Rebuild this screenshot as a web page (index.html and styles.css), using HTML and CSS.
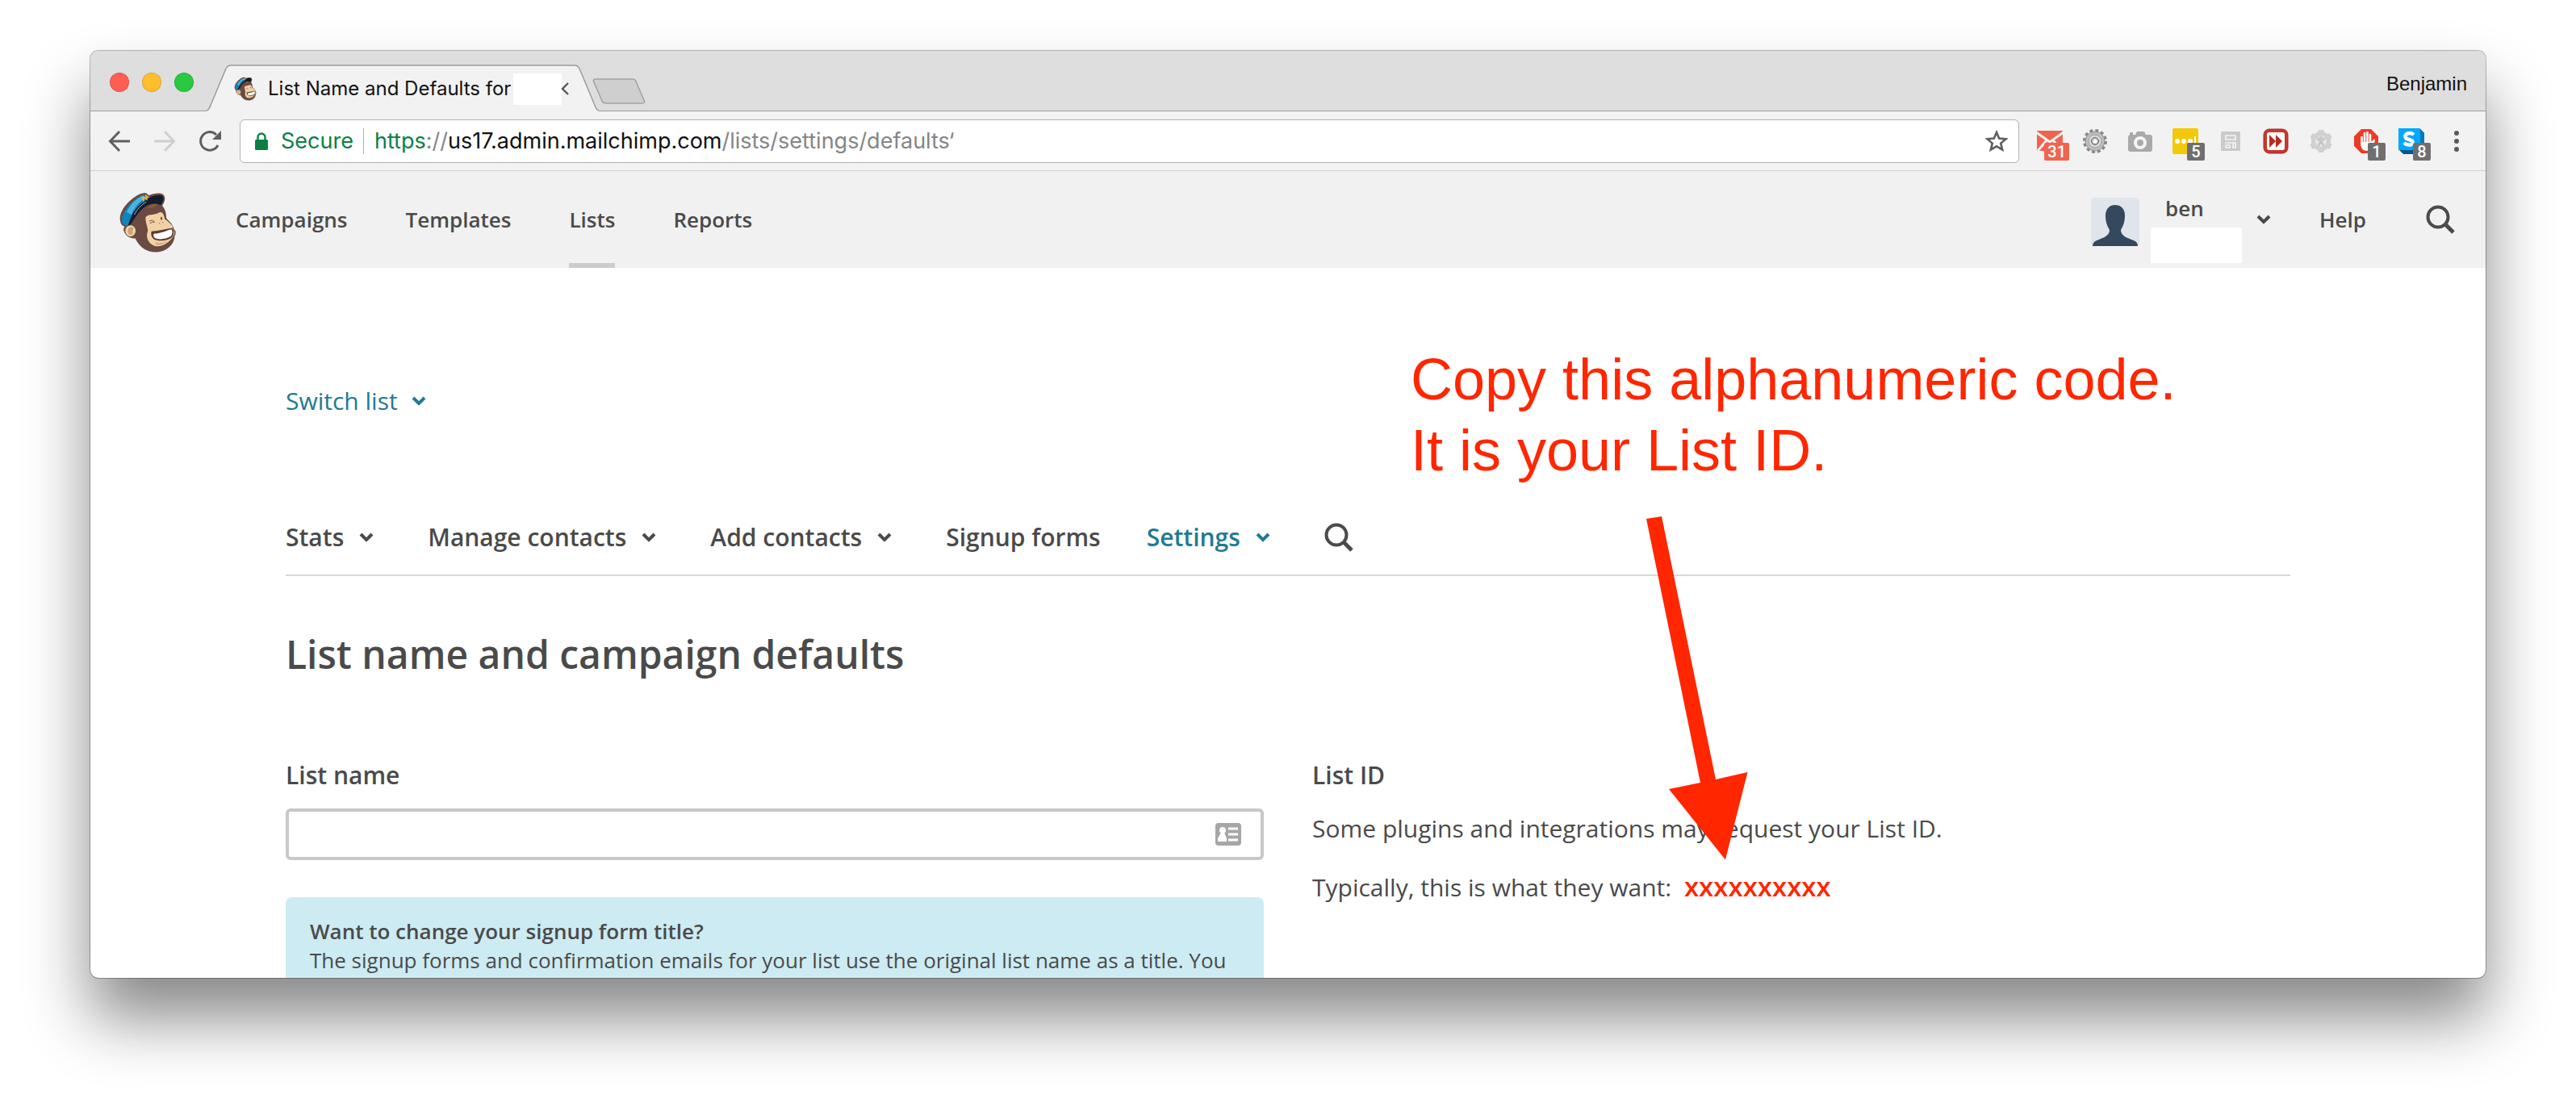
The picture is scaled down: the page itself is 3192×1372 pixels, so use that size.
FILE: index.html
```html
<!DOCTYPE html>
<html lang="en">
<head>
<meta charset="utf-8">
<title>List Name and Defaults</title>
<link rel="stylesheet" href="styles.css">
</head>
<body>
<svg class="defs" aria-hidden="true">
  <symbol id="chimp" viewBox="54 54 216 224">
    <path d="M60 160C56 145 64 122 80 103C100 78 130 58 148 57C156 56 162 61 166 66C184 58 206 56 217 61C230 68 228 88 216 104C226 116 232 132 231 150C240 160 250 168 257 182L260 194C268 197 268 206 262 218C262 246 234 276 196 277C160 278 132 260 116 226C100 228 80 218 74 200C70 194 74 186 76 182C66 178 61 172 60 160Z" fill="#6b4a41"/>
    <path d="M66 160C64 140 84 108 112 84C128 70 144 62 150 64C158 68 162 74 166 80C136 96 112 122 104 140C98 156 94 168 88 180C74 178 68 172 66 160Z" fill="#0a86bd"/>
    <path d="M84 128C96 100 120 76 148 66L154 76C130 90 112 110 102 138Z" fill="#4bb3e0"/>
    <path d="M104 138C120 108 142 92 166 76C186 64 208 62 216 68C224 76 220 90 210 102C190 92 164 98 150 110C132 122 118 146 100 172L88 180C92 168 98 150 104 138Z" fill="#111c2e"/>
    <path d="M112 138C122 118 138 102 156 90" fill="none" stroke="#fff" stroke-width="2"/>
    <path d="M140 72L146 84L148 74L158 80L156 67L166 74" fill="none" stroke="#fbb034" stroke-width="5"/>
    <path d="M160 112C170 98 190 94 204 102C194 102 188 106 184 112Z" fill="#8a5a3b"/>
    <path d="M154 148C160 134 184 140 200 132C214 122 224 134 225 154C236 160 248 172 256 182C250 190 262 198 262 204C256 232 222 258 192 255C168 250 156 228 160 206C168 192 154 176 154 148Z" fill="#f2d1a5"/>
    <path d="M176 200C206 198 232 190 252 188C262 194 260 212 252 222C236 236 200 238 184 228C174 220 174 206 176 200Z" fill="#5a3b33"/>
    <path d="M186 208C212 208 236 194 250 192C256 198 254 210 248 218C230 230 200 232 188 224C182 218 182 212 186 208Z" fill="#fff"/>
    <path d="M168 162C176 156 184 160 188 166C182 162 176 168 170 170M204 168L208 172M216 164L220 168" fill="none" stroke="#7b5140" stroke-width="3"/>
    <ellipse cx="213" cy="152" rx="3" ry="6" fill="#5a3b33"/>
    <ellipse cx="98" cy="198" rx="19" ry="21" fill="#f2d1a5"/>
    <path d="M92 206C86 190 96 182 106 188C110 194 100 196 104 206C102 214 94 212 92 206Z" fill="#d9a878" stroke="#a4744f" stroke-width="2"/>
    <path d="M192 238C208 248 222 240 234 234C228 246 212 252 192 250Z" fill="#dcae7a"/>
  </symbol>
  <symbol id="chevron" viewBox="0 0 18 12"><path d="M2 2L9 9L16 2" fill="none" stroke="currentColor" stroke-width="4"/></symbol>
  <symbol id="search" viewBox="0 0 36 36"><circle cx="15" cy="15" r="12.5" fill="none" stroke="currentColor" stroke-width="4"/><path d="M23 23L34 34" stroke="currentColor" stroke-width="5"/></symbol>
</svg>

<div class="window">
  <div class="tabstrip">
    <div class="lights"><i class="light red"></i><i class="light amber"></i><i class="light green"></i></div>
    <div class="tab">
      <svg class="tab-shape" viewBox="0 0 486 58" preserveAspectRatio="none" aria-hidden="true"><path d="M0 57.5C4 56 4 52 6 48L24 5Q26 1 30 1H456Q460 1 462 5L480 48C482 52 482 56 486 57.5V58H0Z" fill="#f2f2f2"/><path d="M0 57C4 56 4 52 6 48L24 5Q26 1 30 1H456Q460 1 462 5L480 48C482 52 482 56 486 57" fill="none" stroke="#9b9b9b" stroke-width="1.5"/></svg>
      <svg class="favicon" aria-hidden="true"><use href="#chimp"/></svg>
      <span class="tab-title">List Name and Defaults for</span>
      <span class="tab-mask"></span>
      <svg class="tab-close" viewBox="0 0 9 16" aria-hidden="true"><path d="M8 1L1 8L8 15" fill="none" stroke="#555" stroke-width="2.4"/></svg>
    </div>
    <svg class="newtab" viewBox="0 0 66 32" aria-hidden="true"><path d="M4 1H50Q53 1 54 4L64 27Q66 31 62 31H17Q13 31 12 28L2 5Q0 1 4 1Z" fill="#cfcfcf" stroke="#a3a3a3" stroke-width="1.6"/></svg>
    <span class="profile">Benjamin</span>
  </div>

  <div class="toolbar">
    <button class="tool" aria-label="Back"><svg viewBox="0 0 28 28"><path d="M14 2L2.500 14L14 26M3 14H27" fill="none" stroke="#5f5f5f" stroke-width="3"/></svg></button>
    <button class="tool" aria-label="Forward"><svg viewBox="0 0 28 28"><path d="M14 2L25.500 14L14 26M1 14H25" fill="none" stroke="#d0d0d0" stroke-width="3"/></svg></button>
    <button class="tool" aria-label="Reload"><svg viewBox="0 0 28 28"><path d="M24 19A11.300 11.300 0 1 1 22 6" fill="none" stroke="#5f5f5f" stroke-width="3"/><path d="M28 1V12H17Z" fill="#5f5f5f"/></svg></button>
    <div class="omnibox">
      <svg class="lock" viewBox="0 0 16 22" aria-hidden="true"><rect y="9" width="16" height="13" rx="1.500" fill="#0b8043"/><path d="M3.500 10V6A4.500 4.500 0 0 1 12.500 6V10" fill="none" stroke="#0b8043" stroke-width="2.400"/></svg>
      <span class="secure">Secure</span>
      <span class="url" role="textbox" aria-label="Address"><span class="scheme">https</span><span class="dim">://</span>us17.admin.mailchimp.com<span class="dim">/lists/settings/defaults‘</span></span>
      <svg class="star" viewBox="0 0 28 28" aria-hidden="true"><path d="M14 3L17.200 10.500L25.500 11.200L19.200 16.600L21.200 24.600L14 20.300L6.800 24.600L8.800 16.600L2.500 11.200L10.800 10.500Z" fill="none" stroke="#5f5f5f" stroke-width="2.600"/></svg>
    </div>
    <div class="extensions">
      <button class="ext" aria-label="Mail"><svg viewBox="0 0 32 32"><path d="M0 3H32V28H0Z" fill="#f0644e"/><path d="M-1 5L16 17L33 5M1 28L12 15M31 28L20 15" fill="none" stroke="#f2f2f2" stroke-width="3"/></svg><b class="badge coral">31</b></button>
      <button class="ext" aria-label="Settings"><svg viewBox="0 0 32 32"><circle cx="16" cy="16" r="13" fill="none" stroke="#858585" stroke-width="4" stroke-dasharray="3.800 3"/><circle cx="16" cy="16" r="12" fill="#bdbdbd" stroke="#909090"/><circle cx="16" cy="16" r="8" fill="#d8d8d8" stroke="#a0a0a0"/><circle cx="16" cy="16" r="4.500" fill="#bbb" stroke="#666"/><circle cx="16" cy="16" r="2.500" fill="#fff"/></svg></button>
      <button class="ext" aria-label="Camera"><svg viewBox="0 0 32 32"><path d="M4 8H10L12 4H21L23 8H28Q31 8 31 11V26Q31 29 28 29H4Q1 29 1 26V11Q1 8 4 8Z" fill="#aaa"/><rect x="3" y="5" width="4" height="3" fill="#aaa"/><circle cx="16" cy="18" r="6" fill="#aaa" stroke="#f5f5f5" stroke-width="4"/></svg></button>
      <button class="ext" aria-label="Notes"><svg viewBox="0 0 32 32"><rect width="32" height="32" rx="2" fill="#f3c90a"/><circle cx="6" cy="16" r="3" fill="#fff"/><circle cx="14" cy="16" r="3" fill="#fff"/><circle cx="22" cy="16" r="3" fill="#fff"/><path d="M28 10V20" stroke="#fff" stroke-width="2"/></svg><b class="badge">5</b></button>
      <button class="ext" aria-label="Reader"><svg viewBox="0 0 32 32"><rect x="4" y="4" width="24" height="24" rx="1" fill="#cacaca"/><path d="M10 9H22V14H10ZM9 18H23M10 21V24H15V21ZM19 18V24H22V18" fill="none" stroke="#f5f5f5" stroke-width="1.600"/></svg></button>
      <button class="ext" aria-label="Speed"><svg viewBox="0 0 32 32"><rect x="1" y="1" width="30" height="30" rx="7" fill="#c8382c" stroke="#a82c22"/><rect x="5" y="5" width="22" height="22" rx="3" fill="#fff"/><path d="M8 8L16 16L8 24ZM16 8L24 16L16 24Z" fill="#b62c20"/></svg></button>
      <button class="ext" aria-label="Accessibility"><svg viewBox="0 0 32 32"><g fill="#d0d0d0"><circle cx="16" cy="16" r="12"/><rect x="12.500" y="2" width="7" height="28" rx="1"/><rect x="12.500" y="2" width="7" height="28" rx="1" transform="rotate(60 16 16)"/><rect x="12.500" y="2" width="7" height="28" rx="1" transform="rotate(120 16 16)"/></g><circle cx="16" cy="16" r="7" fill="#e6e6e6"/><circle cx="16" cy="11.500" r="2" fill="#c4c4c4"/><path d="M11 12L16 16L21 12M12.500 22L16 16L19.500 22" fill="none" stroke="#c4c4c4" stroke-width="2.600"/></svg></button>
      <button class="ext" aria-label="Blocker"><svg viewBox="0 0 32 32"><path d="M10 1H22L31 10V22L22 31H10L1 22V10Z" fill="#ee3a24"/><path d="M10.500 11V18M14 6V18M17.500 5V18M21 8V20" stroke="#fff" stroke-width="2.600" stroke-linecap="round"/><path d="M9 17H22L26 13Q28 15 25 20Q22 28 16 28Q9 28 9 17Z" fill="#fff"/></svg><b class="badge">1</b></button>
      <button class="ext" aria-label="Similar sites"><svg viewBox="0 0 32 32"><path d="M26 0L32 6V32H6L0 26Z" fill="#05568c"/><path d="M26 0L32 6V26L26 26Z" fill="#0878b8"/><rect width="27" height="27" fill="#00a8ff"/><path d="M19 8Q16 5 11 6.500Q6.500 9 9.500 12.500L17 15.500Q19 19 15 20.500Q10 21 7 18" fill="none" stroke="#fff" stroke-width="4.500"/></svg><b class="badge">8</b></button>
      <button class="ext" aria-label="Menu"><svg viewBox="0 0 32 32" fill="#5a5a5a"><circle cx="16" cy="6" r="3"/><circle cx="16" cy="16" r="3"/><circle cx="16" cy="26" r="3"/></svg></button>
    </div>
  </div>

  <header class="header">
    <a class="logo" href="#" aria-label="Home"><svg><use href="#chimp"/></svg></a>
    <nav class="mainnav">
      <a href="#">Campaigns</a>
      <a href="#">Templates</a>
      <a href="#" class="current">Lists</a>
      <a href="#">Reports</a>
    </nav>
    <button class="account">
      <svg class="avatar" viewBox="0 0 60 60" aria-hidden="true"><rect width="60" height="60" rx="4" fill="#e0e5eb"/><path d="M30 9C38 9 42 15 42 22C42 32 39 36 37 40C37 48 46 50 53 53Q58 55 58 60H2Q2 55 7 53C14 50 23 48 23 40C21 36 18 32 18 22C18 15 22 9 30 9Z" fill="#34495e"/></svg>
      <span class="who"><span>ben</span><span class="who-mask"></span></span>
      <svg class="chev" aria-hidden="true"><use href="#chevron"/></svg>
    </button>
    <a class="help" href="#">Help</a>
    <button class="find" aria-label="Search"><svg><use href="#search"/></svg></button>
  </header>

  <main class="page">
    <button class="switch">Switch list <svg class="chev" aria-hidden="true"><use href="#chevron"/></svg></button>
    <nav class="subnav">
      <button class="drop">Stats <svg class="chev" aria-hidden="true"><use href="#chevron"/></svg></button>
      <button class="drop">Manage contacts <svg class="chev" aria-hidden="true"><use href="#chevron"/></svg></button>
      <button class="drop">Add contacts <svg class="chev" aria-hidden="true"><use href="#chevron"/></svg></button>
      <a href="#">Signup forms</a>
      <button class="drop active">Settings <svg class="chev" aria-hidden="true"><use href="#chevron"/></svg></button>
      <button class="find" aria-label="Search list"><svg><use href="#search"/></svg></button>
    </nav>
    <h1>List name and campaign defaults</h1>
    <div class="columns">
      <section>
        <label class="label" for="list-name">List name</label>
        <div class="field">
          <input id="list-name" type="text">
          <svg class="card-icon" viewBox="0 0 32 28" aria-hidden="true"><rect width="32" height="28" rx="4" fill="#a6a6a6"/><circle cx="9" cy="9" r="4" fill="#fff"/><path d="M7 12H11L14 19V23H3V19Z" fill="#fff"/><path d="M16 7H28M16 14H28M16 21H28" stroke="#fff" stroke-width="3"/></svg>
        </div>
        <div class="callout">
          <strong>Want to change your signup form title?</strong>
          <p>The signup forms and confirmation emails for your list use the original list name as a title. You</p>
        </div>
      </section>
      <section class="list-id">
        <h2 class="label">List ID</h2>
        <p>Some plugins and integrations may request your List ID.</p>
        <p>Typically, this is what they want: <b>xxxxxxxxxx</b></p>
        <div class="note">Copy this alphanumeric code.<br>It is your List ID.</div>
        <svg class="arrow" viewBox="0 0 98 426" aria-hidden="true"><path d="M-28 3L-9 0L58 326L97.500 317L70 425.500L0 338L39 330Z" fill="#ff2600"/></svg>
      </section>
    </div>
  </main>
</div>
</body>
</html>
```
FILE: styles.css
```css
* { box-sizing: border-box; }

body {
  margin: 0;
  height: 100vh;
  padding: 63px 112px 160px;
  display: flex;
  background: #fff;
  color: #4a4a4a;
  font: 30px/40px "Open Sans", sans-serif;
  overflow: hidden;
}

h1, h2, p { margin: 0; }
a { color: inherit; text-decoration: none; }
button {
  margin: 0;
  padding: 0;
  border: 0;
  background: none;
  color: inherit;
  font: inherit;
}
svg { display: block; flex: none; overflow: visible; }
.defs { position: absolute; width: 0; height: 0; }

.window {
  flex: 1;
  min-width: 0;
  display: flex;
  flex-direction: column;
  overflow: hidden;
  border-radius: 10px;
  background: #fff;
  box-shadow: 0 0 0 1px rgba(0, 0, 0, .28), 0 50px 80px rgba(0, 0, 0, .47);
}

/* browser chrome */
.tabstrip {
  flex: none;
  height: 75px;
  display: flex;
  align-items: flex-end;
  background: #dedede;
  border-bottom: 1px solid #9b9b9b;
}
.lights { display: flex; gap: 16px; padding: 0 16px 23px 24px; }
.light { width: 24px; height: 24px; border-radius: 50%; border: 1px solid rgba(0, 0, 0, .12); }
.red { background: #ff5f52; }
.amber { background: #ffbe2e; }
.green { background: #29ca41; }

.tab {
  position: relative;
  width: 486px;
  height: 58px;
  margin-bottom: -1px;
  padding: 2px 34px 0 34px;
  display: flex;
  align-items: center;
  font: 24px/30px Inter, sans-serif;
  color: #111;
}
.tab > * { position: relative; }
.tab > .tab-shape { position: absolute; inset: 0; width: 100%; height: 100%; }
.favicon { width: 28px; height: 30px; margin-right: 14px; }
.tab-title { width: 304px; white-space: nowrap; }
.tab-mask { width: 60px; height: 39px; background: #fff; }
.tab-close { width: 9px; height: 16px; }
.newtab { width: 66px; height: 32px; margin: 0 auto 8px -8px; }
.profile { padding: 0 23px 18px; font: 24px/30px "Liberation Sans", Arial, sans-serif; color: #111; }

.toolbar {
  flex: none;
  height: 74px;
  padding: 0 20px 0 22px;
  display: flex;
  align-items: center;
  background: #f2f2f2;
  border-bottom: 1px solid #d2d2d2;
}
.tool { width: 28px; margin-right: 28px; }
.tool:nth-child(3) { margin-right: 23px; }
.omnibox {
  flex: 1;
  height: 54px;
  padding: 0 13px 0 18px;
  display: flex;
  align-items: center;
  border: 1px solid #b3b3b3;
  border-radius: 6px;
  background: #fff;
  font: 27px/32px Inter, sans-serif;
}
.lock { width: 16px; height: 22px; margin-right: 16px; }
.secure { padding-right: 12px; border-right: 1px solid #b0b0b0; color: #0b8043; }
.url { flex: 1; padding-left: 13px; color: #111; }
.scheme { color: #0b8043; }
.dim { color: #858585; }
.star { width: 28px; height: 28px; }

.extensions { display: flex; gap: 24px; padding-left: 22px; }
.ext { position: relative; width: 32px; height: 32px; }
.ext svg { overflow: hidden; }
.badge {
  position: absolute;
  right: -8px;
  bottom: -8px;
  min-width: 22px;
  padding: 0 4px;
  border-radius: 2px;
  background: #6f6f6f;
  color: #fff;
  font: 500 20px/22px Roboto, sans-serif;
}
.coral { background: #f0644e; }

/* application header */
.header {
  flex: none;
  height: 120px;
  padding: 0 38px 0 35px;
  display: flex;
  align-items: center;
  background: #f1f1f1;
  font-size: 26px;
  font-weight: 600;
}
.logo svg { width: 72px; height: 75px; margin-top: 6px; }
.mainnav { flex: 1; align-self: stretch; display: flex; gap: 72px; padding-left: 73px; }
.mainnav a { line-height: 120px; }
.mainnav .current { box-shadow: inset 0 -6px #ccc; }
.account { display: flex; align-items: center; margin-right: 60px; text-align: left; }
.avatar { width: 60px; height: 60px; margin: 6px 14px 0 0; }
.who { display: flex; flex-direction: column; gap: 4px; padding-top: 20px; line-height: 40px; }
.who > span:first-child { padding-left: 18px; }
.who-mask { width: 113px; height: 44px; background: #fff; }
.account .chev { margin-left: 18px; }
.help { margin-right: 74px; }
.find svg { width: 36px; height: 36px; }
.chev { width: 18px; height: 12px; }

/* page */
.page { flex: 1; min-height: 0; padding: 145px 242px 0; }
.switch { display: flex; align-items: center; gap: 17px; color: #217a93; }
.subnav {
  display: flex;
  align-items: center;
  gap: 57px;
  height: 69px;
  margin-top: 128px;
  padding-bottom: 26px;
  border-bottom: 2px solid #d8d8d8;
  font-weight: 600;
}
.drop { display: flex; align-items: center; gap: 19px; padding-right: 10px; }
.active { color: #217a93; }
h1 { margin: 65px 0 98px; font-size: 48px; line-height: 64px; font-weight: 600; }
.columns { display: grid; grid-template-columns: 1fr 1fr; gap: 60px; }
.label { display: block; font-size: 30px; line-height: 40px; font-weight: 600; }
.field { position: relative; margin: 21px 0 46px; }
.field input {
  display: block;
  width: 100%;
  height: 64px;
  padding: 0 72px 0 16px;
  border: 4px solid #c8c8c8;
  border-radius: 6px;
  background: #fff;
  font: inherit;
}
.card-icon { position: absolute; right: 28px; top: 18px; width: 32px; height: 28px; }
.callout {
  height: 200px;
  padding: 24px 30px;
  border-radius: 8px;
  background: #cdebf2;
  font-size: 26px;
  line-height: 36px;
}
.callout strong { font-weight: 600; }
.list-id { position: relative; }
.list-id p { margin-top: 26px; }
.list-id p + p { margin-top: 32px; }
.list-id b { margin-left: 8px; color: #ff2600; font-size: 33px; font-weight: 600; }

/* instructor's note laid over the page */
.note {
  position: absolute;
  left: 122px;
  top: -515px;
  color: #ff2600;
  font: 72px/88px "Liberation Sans", Helvetica, sans-serif;
  white-space: nowrap;
}
.arrow { position: absolute; left: 442px; top: -301px; width: 98px; height: 426px; }
```
